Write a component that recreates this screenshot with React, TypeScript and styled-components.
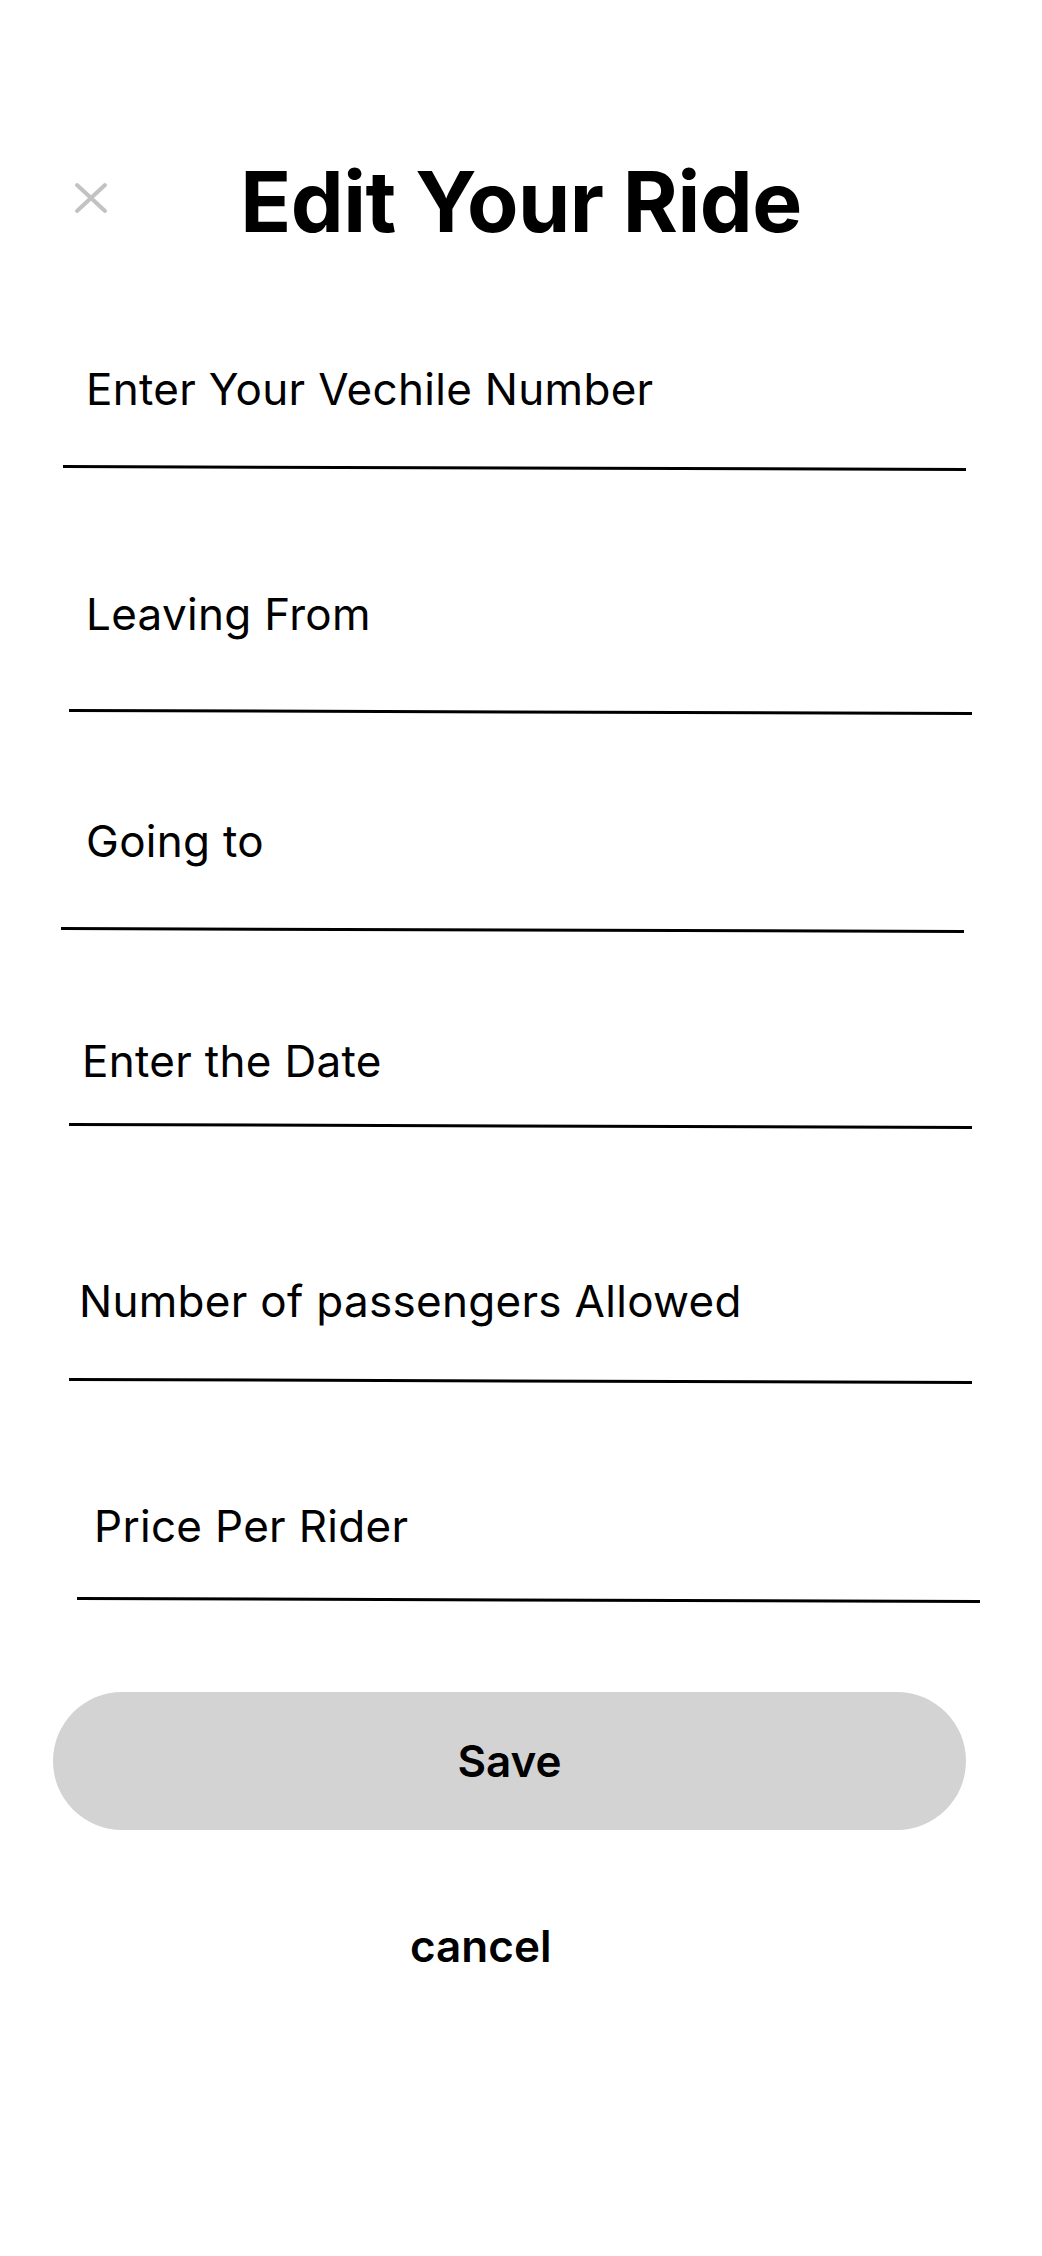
import styled, { createGlobalStyle } from "styled-components";

const GlobalStyle = createGlobalStyle`
  html, body {
    margin: 0;
    padding: 0;
    background: #ffffff;
  }
  body {
    font-family: Inter, "Noto Sans", "Liberation Sans", sans-serif;
    color: #000;
  }
`;

interface FieldSpec {
  label: string;
  top: number;
  indent: number;
  gap: number;
  lineLeft: number;
}

const fields: FieldSpec[] = [
  { label: "Enter Your Vechile Number", top: 123, indent: 86, gap: 54, lineLeft: 63 },
  { label: "Leaving From", top: 124, indent: 86, gap: 73, lineLeft: 69 },
  { label: "Going to", top: 107, indent: 86, gap: 64, lineLeft: 61 },
  { label: "Enter the Date", top: 109, indent: 82, gap: 40, lineLeft: 69 },
  { label: "Number of passengers Allowed", top: 153, indent: 79, gap: 55, lineLeft: 69 },
  { label: "Price Per Rider", top: 123, indent: 94, gap: 49, lineLeft: 77 },
];

const CloseIcon = () => (
  <svg width="34" height="32" viewBox="0 0 34 32" fill="none">
    <path d="M3 3L31 29M31 3L3 29" stroke="#c2c2c2" strokeWidth="4" strokeLinecap="round" />
  </svg>
);

export default function App() {
  return (
    <>
      <GlobalStyle />
      <Page>
        <Header>
          <CloseButton aria-label="close">
            <CloseIcon />
          </CloseButton>
          <Title>Edit Your Ride</Title>
        </Header>

        <Form>
          {fields.map((f) => (
            <Field key={f.label} $top={f.top}>
              <Label $indent={f.indent}>{f.label}</Label>
              <Underline $gap={f.gap} $left={f.lineLeft} />
            </Field>
          ))}
        </Form>

        <Footer>
          <SaveButton>Save</SaveButton>
          <CancelLink>cancel</CancelLink>
        </Footer>
      </Page>
    </>
  );
}

const Page = styled.div`
  width: 1042px;
  min-height: 2256px;
  background: #fff;
  padding-top: 160px;
  box-sizing: border-box;
`;

const Header = styled.div`
  display: grid;
  grid-template-columns: 1fr auto 1fr;
  align-items: start;
`;

const CloseButton = styled.div`
  justify-self: start;
  margin-left: 74px;
  margin-top: 22px;
  width: 34px;
  height: 32px;
  display: flex;
  cursor: pointer;
`;

const Title = styled.h1`
  margin: 0;
  font-size: 84px;
  line-height: 84px;
  font-weight: 700;
  letter-spacing: -0.5px;
`;

const Form = styled.div`
  display: flex;
  flex-direction: column;
`;

const Field = styled.div<{ $top: number }>`
  margin-top: ${({ $top }) => $top}px;
  display: flex;
  flex-direction: column;
`;

const Label = styled.div<{ $indent: number }>`
  padding-left: ${({ $indent }) => $indent}px;
  font-size: 44px;
  line-height: 44px;
  font-weight: 400;
  letter-spacing: 0.3px;
`;

const Underline = styled.div<{ $gap: number; $left: number }>`
  margin-top: ${({ $gap }) => $gap}px;
  margin-left: ${({ $left }) => $left}px;
  width: 903px;
  height: 3px;
  background: #000;
  transform: rotate(0.19deg);
  transform-origin: left center;
`;

const Footer = styled.div`
  margin-top: 92px;
  display: flex;
  flex-direction: column;
`;

const SaveButton = styled.button`
  margin-left: 53px;
  width: 913px;
  height: 138px;
  border: none;
  border-radius: 69px;
  background: #d3d3d3;
  font-family: inherit;
  font-size: 44px;
  font-weight: 600;
  color: #000;
  cursor: pointer;
`;

const CancelLink = styled.div`
  margin-top: 94px;
  padding-left: 410px;
  font-size: 44px;
  line-height: 44px;
  font-weight: 600;
  cursor: pointer;
`;
